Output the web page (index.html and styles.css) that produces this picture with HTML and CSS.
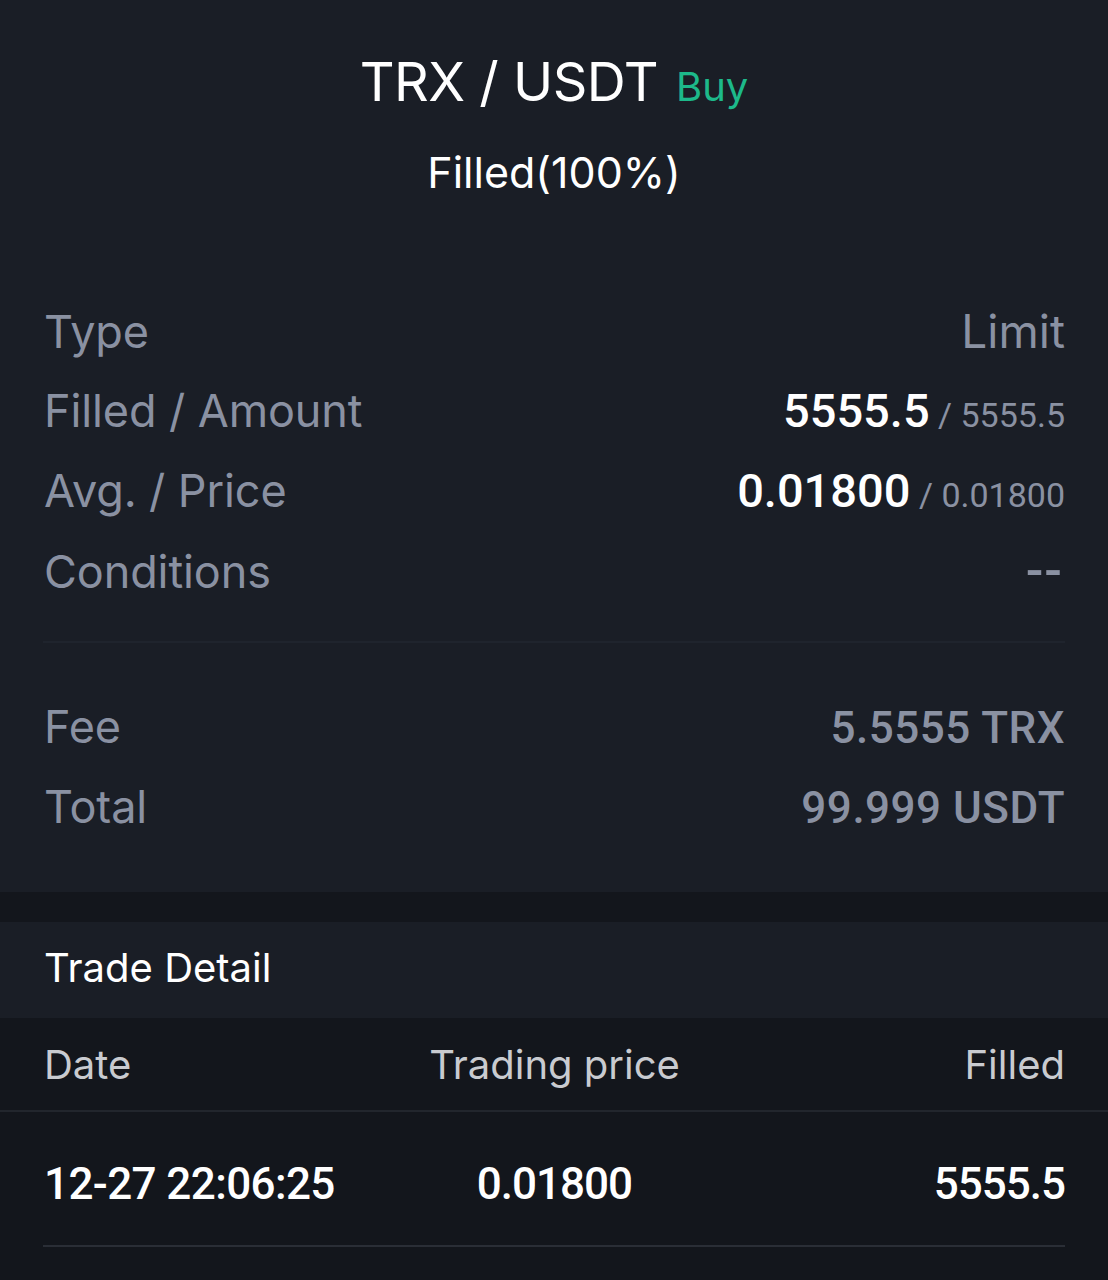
FILE: index.html
```html
<!DOCTYPE html>
<html lang="en">
<head>
<meta charset="utf-8">
<title>Order Detail</title>
<link rel="stylesheet" href="styles.css">
</head>
<body>
<main class="page">
  <section class="summary">
    <header class="order-head">
      <h1 class="pair"><span class="pair-name">TRX / USDT</span><span class="side">Buy</span></h1>
      <div class="status">Filled(100%)</div>
    </header>
    <div class="info">
      <div class="row"><span class="label">Type</span><span class="value">Limit</span></div>
      <div class="row"><span class="label">Filled / Amount</span><span class="value num"><b class="strong">5555.5</b><span class="sub"> / 5555.5</span></span></div>
      <div class="row"><span class="label">Avg. / Price</span><span class="value num"><b class="strong">0.01800</b><span class="sub"> / 0.01800</span></span></div>
      <div class="row"><span class="label">Conditions</span><span class="value num dash">--</span></div>
    </div>
    <div class="divider"></div>
    <div class="info fees">
      <div class="row"><span class="label">Fee</span><span class="value num big">5.5555 TRX</span></div>
      <div class="row"><span class="label">Total</span><span class="value num big">99.999 USDT</span></div>
    </div>
  </section>
  <div class="band"></div>
  <section class="trades">
    <h2 class="trades-title">Trade Detail</h2>
    <div class="thead">
      <span class="c1">Date</span><span class="c2">Trading price</span><span class="c3">Filled</span>
    </div>
    <div class="trow">
      <span class="c1 date">12-27 22:06:25</span><span class="c2">0.01800</span><span class="c3">5555.5</span>
    </div>
  </section>
</main>
</body>
</html>
```
FILE: styles.css
```css
html, body {
  margin: 0;
  padding: 0;
  background: #13161c;
}
body {
  font-family: "Inter", "Roboto", "Liberation Sans", sans-serif;
  color: #ffffff;
}
.page {
  width: 1108px;
  min-height: 1280px;
  background: #13161c;
}
.summary {
  background: #1a1e26;
  height: 892px;
  box-sizing: border-box;
  padding-top: 47px;
}
.order-head {
  text-align: center;
}
.pair {
  margin: 0;
  font-weight: 400;
  line-height: 70px;
  display: flex;
  justify-content: center;
  align-items: baseline;
  gap: 18px;
}
.pair-name {
  font-size: 54px;
  letter-spacing: -0.5px;
  color: #ffffff;
}
.side {
  font-size: 40px;
  color: #1db98a;
}
.status {
  margin-top: 25px;
  font-size: 43px;
  line-height: 50px;
  color: #ffffff;
  letter-spacing: 0;
}
.info {
  padding: 0 43px 0 44px;
  margin-top: 94px;
}
.row {
  display: flex;
  justify-content: space-between;
  align-items: baseline;
  height: 80px;
  line-height: 80px;
}
.label {
  font-size: 45px;
  color: #8a91a2;
  letter-spacing: -0.1px;
}
.value {
  font-size: 46px;
  color: #8a91a2;
}
.num {
  font-family: "Roboto", "Liberation Sans", sans-serif;
}
.strong {
  font-weight: 500;
  font-size: 47px;
  color: #ffffff;
}
.sub {
  font-size: 34px;
  color: #8a91a2;
}
.dash {
  font-size: 52px;
  font-weight: 500;
  letter-spacing: 1px;
  margin-right: 2px;
}
.big {
  font-size: 44px;
  font-weight: 500;
  letter-spacing: 0.5px;
}
.divider {
  margin: 30px 43px 0 43px;
  height: 2px;
  background: #1f242d;
}
.fees {
  margin-top: 44px;
}
.band {
  height: 30px;
  background: #13161c;
}
.trades {
  background: #13161c;
}
.trades-title {
  margin: 0;
  background: #1a1e26;
  height: 96px;
  line-height: 92px;
  padding-left: 44px;
  font-size: 40px;
  font-weight: 400;
  color: #ffffff;
}
.thead, .trow {
  display: grid;
  grid-template-columns: 1fr 1fr 1fr;
  padding: 0 43px 0 44px;
  align-items: center;
}
.thead {
  height: 92px;
  border-bottom: 2px solid #22262d;
  font-size: 40px;
  color: #c9cbd0;
}
.trow {
  margin: 0 43px;
  padding: 10px 0 0 1px;
  box-sizing: border-box;
  height: 135px;
  border-bottom: 2px solid #2a2e36;
  font-family: "Roboto", "Liberation Sans", sans-serif;
  font-size: 44px;
  font-weight: 500;
  letter-spacing: -1px;
  color: #ffffff;
}
.trow .date {
  letter-spacing: -0.6px;
}
.c1 { text-align: left; }
.c2 { text-align: center; }
.c3 { text-align: right; }
```
